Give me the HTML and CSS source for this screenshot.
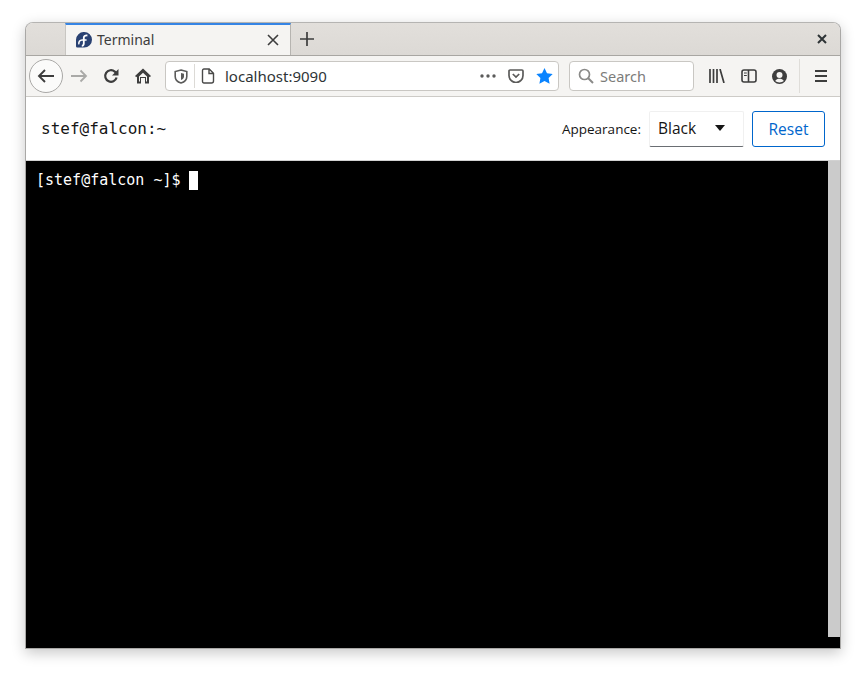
FILE: index.html
```html
<!DOCTYPE html>
<html lang="en">
<head>
<meta charset="utf-8">
<title>Terminal</title>
<link rel="stylesheet" href="styles.css">
</head>
<body>
<div class="window">
  <div class="tabbar">
    <div class="tab-spacer"></div>
    <div class="tab">
      <svg class="favicon" width="16" height="16" viewBox="0 0 16 16">
        <path d="M8.200 0a7.800 7.800 0 0 1 0 15.600H1.300A1.300 1.300 0 0 1 0 14.300V7.800A7.900 7.900 0 0 1 8.200 0z" fill="#294172"/>
        <path d="M5.800 13.800C7.400 13.800 7.800 12.800 7.800 11.600V5.800C7.800 4.200 8.800 3.300 11.400 3.500" fill="none" stroke="#fff" stroke-width="1.800"/>
        <path d="M2.900 12.400C2.400 9.800 3.800 8 6 8H10.600" fill="none" stroke="#fff" stroke-width="1.500"/>
      </svg>
      <span class="tab-title">Terminal</span>
      <svg class="tab-close" width="12" height="12" viewBox="0 0 12 12"><path d="M1 1l10 10M11 1L1 11" stroke="#3d3d3d" stroke-width="1.600" fill="none"/></svg>
    </div>
    <svg class="new-tab" width="16" height="16" viewBox="0 0 16 16"><path d="M8 1v14M1 8h14" stroke="#3d3d3d" stroke-width="1.700" fill="none"/></svg>
    <div class="tabbar-fill"></div>
    <svg class="win-close" width="10" height="10" viewBox="0 0 10 10"><path d="M1 1l8 8M9 1L1 9" stroke="#2e3436" stroke-width="2" fill="none"/></svg>
  </div>
  <div class="toolbar">
    <div class="back">
      <svg width="18" height="16" viewBox="0 0 18 16"><path d="M17 8H2M8 2L2 8l6 6" fill="none" stroke="#3d3d3d" stroke-width="1.900"/></svg>
    </div>
    <svg class="forward" width="17" height="14" viewBox="0 0 17 14"><path d="M0 7h15M9.500 1.500L15 7l-5.500 5.500" fill="none" stroke="#a9a9a7" stroke-width="1.800"/></svg>
    <svg class="reload" width="16" height="16" viewBox="0 0 16 16"><path d="M13.600 9.500A5.800 5.800 0 1 1 11.800 3.600L14 5.600" fill="none" stroke="#3d3d3d" stroke-width="2.200"/><path d="M15.500 1v6.500H9z" fill="#3d3d3d"/></svg>
    <svg class="home" width="16" height="16" viewBox="0 0 16 16"><path d="M8 .5L16 8l-1.300 1.300-.7-.7V15.500H10V10H6v5.500H2V8.600l-.7.700L0 8z" fill="#3d3d3d"/><path d="M6.500 10.500h3v5h-3z" fill="#f5f4f2"/><path d="M4 8.500L8 4.700l4 3.800V13.500h-1V9H5v4.500H4z" fill="#f5f4f2"/></svg>
    <div class="urlbar">
      <svg class="shield" width="14" height="15" viewBox="0 0 14 15"><path d="M7 1l5.800 1.500v5C12.800 11 10 13.200 7 14 4 13.200 1.200 11 1.200 7.500v-5z" fill="none" stroke="#5b5b5a" stroke-width="1.600"/><path d="M7 4l3 .8v2.700C10 9.500 8.500 10.500 7 11z" fill="#5b5b5a"/></svg>
      <span class="url-sep"></span>
      <svg class="page" width="14" height="16" viewBox="0 0 14 16"><path d="M2.800 1h5.400L12.500 5.300V13a2 2 0 0 1-2 2h-7.700a1.500 1.500 0 0 1-1.300-1.500V2.500A1.500 1.500 0 0 1 2.800 1zM8 1v4.500h4.500" fill="none" stroke="#4a4a49" stroke-width="1.400"/></svg>
      <span class="url-text">localhost:9090</span>
      <svg class="dots" width="16" height="4" viewBox="0 0 16 4"><circle cx="2" cy="2" r="1.700" fill="#5b5b5a"/><circle cx="8" cy="2" r="1.700" fill="#5b5b5a"/><circle cx="14" cy="2" r="1.700" fill="#5b5b5a"/></svg>
      <svg class="pocket" width="16" height="14" viewBox="0 0 16 14"><path d="M2 1h12a1 1 0 0 1 1 1v4.500a7 7 0 0 1-14 0V2a1 1 0 0 1 1-1z" fill="none" stroke="#5b5b5a" stroke-width="1.700"/><path d="M4.800 5L8 8l3.200-3" fill="none" stroke="#5b5b5a" stroke-width="1.700"/></svg>
      <svg class="star" width="17" height="16" viewBox="0 0 17 16"><path d="M8.500 0l2.500 5.200 5.700.8-4.100 4 1 5.700-5.100-2.700-5.100 2.700 1-5.700L.3 6 6 5.200z" fill="#0a84ff"/></svg>
    </div>
    <div class="searchbar">
      <svg width="16" height="16" viewBox="0 0 16 16"><circle cx="6.500" cy="6.500" r="5" fill="none" stroke="#8a8a88" stroke-width="1.700"/><path d="M10 10l5 5" stroke="#8a8a88" stroke-width="2"/></svg>
      <span class="search-text">Search</span>
    </div>
    <svg class="library" width="16" height="14" viewBox="0 0 16 14"><path d="M1 0v14M4.500 0v14M8 0v14M11 0l4 14" fill="none" stroke="#3d3d3d" stroke-width="1.700"/></svg>
    <svg class="sidebar" width="16" height="14" viewBox="0 0 16 14"><rect x="1" y="1" width="14" height="12" rx="2" fill="none" stroke="#3d3d3d" stroke-width="1.600"/><path d="M7.500 1v12" stroke="#3d3d3d" stroke-width="1.600"/><path d="M3 4h2.800M3 6.500h2.800" stroke="#3d3d3d" stroke-width="1.200"/></svg>
    <svg class="account" width="15" height="15" viewBox="0 0 15 15"><circle cx="7.500" cy="7.500" r="7.500" fill="#3d3d3d"/><circle cx="7.500" cy="6" r="3" fill="#f5f4f2"/><path d="M3.200 12c1-1.700 2.400-2.200 4.300-2.200s3.300.5 4.300 2.200c-1 .9-2.600 1.400-4.300 1.400S4.200 12.900 3.200 12z" fill="#f5f4f2"/></svg>
    <span class="tool-sep"></span>
    <svg class="menu" width="12" height="12" viewBox="0 0 12 12"><path d="M0 1h12M0 6h12M0 11h12" stroke="#3d3d3d" stroke-width="1.800"/></svg>
  </div>
  <div class="app-header">
    <span class="host">stef@falcon:~</span>
    <span class="label">Appearance:</span>
    <div class="select">
      <span>Black</span>
      <span class="caret"></span>
    </div>
    <button class="reset">Reset</button>
  </div>
  <div class="terminal">
    <div class="term-screen">
      <span class="prompt">[stef@falcon ~]$ </span><span class="cursor"></span>
    </div>
    <div class="term-scroll">
      <div class="thumb"></div>
    </div>
  </div>
</div>
</body>
</html>
```
FILE: styles.css
```css
* { box-sizing: border-box; }
html, body { margin: 0; height: 100%; background: #fff; overflow: hidden; }
body { padding: 22px 25px 28px; font-family: "Noto Sans", sans-serif; }
svg { display: block; flex: none; }

.window {
  width: 816px;
  height: 627px;
  display: flex;
  flex-direction: column;
  border: 1px solid #a9a8a6;
  border-top-color: #b5b4b2;
  border-radius: 8px 8px 0 0;
  box-shadow: 0 4px 14px rgba(0, 0, 0, .22);
  overflow: hidden;
  background: #fff;
}

.tabbar {
  height: 33px;
  flex: none;
  display: flex;
  align-items: center;
  background: linear-gradient(#e2dfdb, #dcd9d5);
  border-bottom: 1px solid #a8a6a2;
}
.tab-spacer { width: 39px; height: 100%; }
.tab {
  width: 226px;
  height: 32px;
  display: flex;
  align-items: center;
  padding: 0 11px 1px 10px;
  background: #f5f4f2;
  border-top: 2px solid #3584e4;
  border-right: 1px solid #b6b4b0;
  border-left: 1px solid #c8c6c2;
  align-self: flex-start;
}
.tab-title {
  margin-left: 5px;
  font-size: 14px;
  line-height: 19px;
  color: #3d3d3d;
  flex: 1;
}
.new-tab { margin-left: 8px; }
.tabbar-fill { flex: 1; }
.win-close { margin-right: 13px; }

.toolbar {
  height: 41px;
  flex: none;
  display: flex;
  align-items: center;
  background: #f5f4f2;
  border-bottom: 1px solid #cdcbc7;
  padding-left: 3px;
}
.back {
  width: 34px;
  height: 34px;
  border-radius: 50%;
  border: 1px solid #a9a8a6;
  background: #fbfbfa;
  display: flex;
  align-items: center;
  justify-content: center;
  flex: none;
}
.forward { margin-left: 8px; }
.reload { margin-left: 15px; }
.home { margin-left: 16px; }

.urlbar {
  margin-left: 14px;
  width: 394px;
  height: 30px;
  display: flex;
  align-items: center;
  background: #fff;
  border: 1px solid #c9c7c3;
  border-radius: 4px;
  padding-left: 8px;
  flex: none;
}
.url-sep { width: 1px; height: 24px; background: #dcdad6; margin-left: 6px; }
.page { margin-left: 6px; }
.url-text { margin-left: 10px; font-size: 15px; color: #2e3436; flex: 1; }
.dots { margin-right: 12px; }
.pocket { margin-right: 12px; }
.star { margin-right: 5px; }

.searchbar {
  margin-left: 10px;
  width: 125px;
  height: 30px;
  display: flex;
  align-items: center;
  background: #fff;
  border: 1px solid #c9c7c3;
  border-radius: 4px;
  padding-left: 8px;
  flex: none;
}
.search-text { margin-left: 6px; font-size: 14.500px; color: #7c7c7a; }

.library { margin-left: 15px; }
.sidebar { margin-left: 16px; }
.account { margin-left: 15px; }
.tool-sep { width: 1px; height: 34px; background: #dfddd9; margin-left: 12px; }
.menu { margin-left: 15px; }

.app-header {
  height: 64px;
  flex: none;
  display: flex;
  align-items: center;
  background: #fff;
  padding: 0 15px 0 15px;
  border-bottom: 1px solid #d2d2d2;
}
.host {
  font-family: "DejaVu Sans Mono", monospace;
  font-size: 16px;
  color: #151515;
  flex: 1;
}
.label {
  font-family: "Open Sans", sans-serif;
  font-size: 13.500px;
  color: #151515;
  margin-right: 8px;
}
.select {
  width: 95px;
  height: 36px;
  display: flex;
  align-items: center;
  justify-content: space-between;
  padding: 0 18px 2px 8px;
  font-family: "Open Sans", sans-serif;
  font-size: 15.500px;
  color: #151515;
  border: 1px solid #f0f0f0;
  border-bottom-color: #6a6e73;
  border-radius: 2px;
}
.caret {
  width: 0;
  height: 0;
  border-left: 5.500px solid transparent;
  border-right: 5.500px solid transparent;
  border-top: 6px solid #151515;
}
.reset {
  margin-left: 8px;
  width: 73px;
  height: 36px;
  font-family: "Open Sans", sans-serif;
  font-size: 15.500px;
  color: #06c;
  background: #fff;
  border: 1px solid #06c;
  border-radius: 3px;
  padding: 0;
}

.terminal {
  flex: 1;
  display: flex;
  background: #000;
  min-height: 0;
}
.term-screen {
  flex: 1;
  padding: 10px 0 0 10px;
  display: flex;
  align-items: flex-start;
  font-family: "DejaVu Sans Mono", monospace;
  font-size: 15px;
  line-height: 18px;
  color: #fff;
}
.prompt { white-space: pre; }
.cursor { width: 9px; height: 19px; margin-left: -1px; background: #fff; }
.term-scroll { width: 12px; flex: none; padding-bottom: 11px; display: flex; }
.thumb { flex: 1; background: #cbcbcb; }
```
